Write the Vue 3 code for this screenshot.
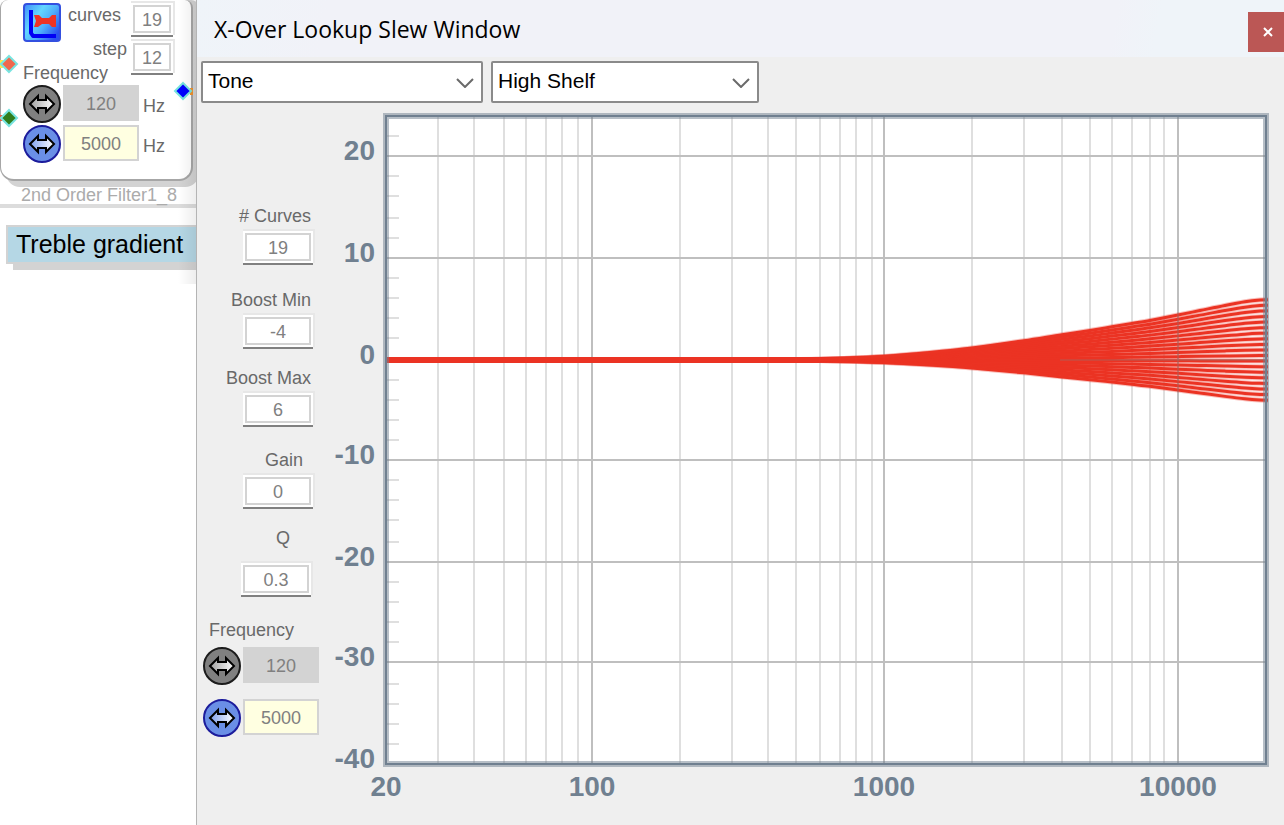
<script setup>
import { ref } from 'vue'

const curves = ref('19')
const step = ref('12')
const lowFreq = ref('120')
const highFreq = ref('5000')
const filterType = ref('Tone')
const filterShape = ref('High Shelf')

const fields = ref([
  { id: 'num-curves', label: '# Curves', value: '19', kind: 'end' },
  { id: 'boost-min', label: 'Boost Min', value: '-4', kind: 'end' },
  { id: 'boost-max', label: 'Boost Max', value: '6', kind: 'end' },
  { id: 'gain', label: 'Gain', value: '0', kind: 'mid' },
  { id: 'q', label: 'Q', value: '0.3', kind: 'spread' }
])

const majorX = [592, 884, 1178]
const minorX = [
  438, 474, 504, 526, 546, 562, 578,
  680, 732, 768, 796, 820, 840, 856, 872,
  972, 1024, 1062, 1090, 1112, 1132, 1150, 1164
]
const majorY = [156, 258, 360, 460, 562, 662]
const minorY = [
  136, 176, 196, 218, 238, 278, 298, 318, 338, 380, 400, 420, 440,
  480, 500, 520, 542, 582, 602, 622, 642, 684, 704, 724, 744
]
const yLabels = [
  { t: '20', y: 160 }, { t: '10', y: 262 }, { t: '0', y: 364 }, { t: '-10', y: 464 },
  { t: '-20', y: 566 }, { t: '-30', y: 666 }, { t: '-40', y: 768 }
]
const xLabels = [
  { t: '20', x: 386 }, { t: '100', x: 592 }, { t: '1000', x: 884 }, { t: '10000', x: 1178 }
]

// Shelf response: fraction of the full boost reached at each x
const shelf = [
  [387, 0], [740, 0], [800, 0.008], [837, 0.022], [884, 0.06], [930, 0.125], [972, 0.2],
  [1024, 0.32], [1062, 0.42], [1090, 0.49], [1112, 0.55], [1132, 0.605], [1150, 0.655],
  [1178, 0.745], [1200, 0.82], [1225, 0.905], [1245, 0.965], [1260, 0.995], [1268, 1]
]
function curvePath(db) {
  const p = shelf.map(([x, f]) => [x, 360 - f * db * 10.05])
  let d = `M${p[0][0]} ${p[0][1]}`
  for (let i = 0; i < p.length - 1; i++) {
    const a = p[Math.max(i - 1, 0)]
    const b = p[i]
    const c = p[i + 1]
    const e = p[Math.min(i + 2, p.length - 1)]
    const h = (c[0] - b[0]) / 3
    const m1 = i ? (c[1] - a[1]) / (c[0] - a[0]) : 0
    const m2 = (e[1] - b[1]) / (e[0] - b[0])
    d += ` C${b[0] + h} ${b[1] + m1 * h} ${c[0] - h} ${c[1] - m2 * h} ${c[0]} ${c[1]}`
  }
  return d
}
const paths = Array.from({ length: 19 }, (_, i) => curvePath(-4 + (i * 10) / 18))
</script>

<template>
  <div class="desktop">
    <svg class="defs" width="0" height="0" aria-hidden="true">
      <defs>
        <linearGradient id="arrowGrey" x1="0" x2="1" y1="0" y2="0">
          <stop offset="0" stop-color="#a0a0a0" /><stop offset="1" stop-color="#ffffff" />
        </linearGradient>
        <linearGradient id="arrowBlue" x1="0" x2="1" y1="0" y2="0">
          <stop offset="0" stop-color="#7fa0ee" /><stop offset="1" stop-color="#ffffff" />
        </linearGradient>
        <symbol id="swap" viewBox="0 0 38 38">
          <path d="M7 19 L15 11 V15 H23 V11 L31 19 L23 27 V23 H15 V27 Z" stroke="#000" stroke-width="2" />
        </symbol>
      </defs>
    </svg>

    <aside class="canvas">
      <section class="node">
        <div class="node-top">
          <svg class="node-icon" viewBox="0 0 38 39" aria-hidden="true">
            <defs>
              <linearGradient id="tile" x1="0" y1="0" x2="1" y2="0.7">
                <stop offset="0" stop-color="#3f8cf8" />
                <stop offset="0.4" stop-color="#62d6ff" />
                <stop offset="0.65" stop-color="#4fb0fb" />
                <stop offset="1" stop-color="#2a50f0" />
              </linearGradient>
            </defs>
            <rect x="1" y="1" width="36" height="37" rx="3" fill="url(#tile)" stroke="#3350e0" stroke-width="2" />
            <path d="M8 7 V30 L10 33 H33" fill="none" stroke="#0000f4" stroke-width="4" stroke-linejoin="round" />
            <path d="M11 12 H16 L19 15 H26 L29 12 H33 V24 H29 L26 21 H19 L15 24 H11 L13 18 Z" fill="#ee3324" />
          </svg>
          <div class="node-labels">
            <label for="curves">curves</label>
            <label for="step" class="to-end">step</label>
          </div>
          <div class="node-inputs">
            <input id="curves" v-model="curves" class="box" />
            <input id="step" v-model="step" class="box" />
          </div>
        </div>
        <div class="caption">Frequency</div>
        <div class="freq-row">
          <button class="swap" aria-label="Adjust low frequency"><svg viewBox="0 0 38 38" fill="url(#arrowGrey)"><use href="#swap" /></svg></button>
          <input id="nlow" v-model="lowFreq" class="freq off" disabled />
          <label for="nlow">Hz</label>
        </div>
        <div class="freq-row">
          <button class="swap blue" aria-label="Adjust high frequency"><svg viewBox="0 0 38 38" fill="url(#arrowBlue)"><use href="#swap" /></svg></button>
          <input id="nhigh" v-model="highFreq" class="freq" />
          <label for="nhigh">Hz</label>
        </div>
      </section>
      <div class="node-name">2nd Order Filter1_8</div>
      <div class="tag">Treble gradient</div>
      <svg class="pins" viewBox="0 0 196 130" aria-hidden="true">
        <path d="M0 60 H3 V68 H0 Z" fill="#ffe84a" />
        <path d="M0 115 H3 V121 H0 Z" fill="#f0583a" />
        <path d="M190 88 H193 V95 H190 Z" fill="#f0902c" />
        <g stroke="#78e4e0" stroke-width="2">
          <path d="M9 56 L17 64 L9 72 L1 64 Z" fill="#f0684e" />
          <path d="M9 110 L17 118 L9 126 L1 118 Z" fill="#2f7d1c" />
          <path d="M183 83 L191 91 L183 99 L175 91 Z" fill="#0000ff" />
        </g>
      </svg>
    </aside>

    <main class="window">
      <header class="titlebar">
        <h1>X-Over Lookup Slew Window</h1>
        <button class="close" aria-label="Close">
          <svg viewBox="0 0 12 12"><path d="M2 2 L10 10 M10 2 L2 10" stroke="#fff" stroke-width="2" /></svg>
        </button>
      </header>
      <div class="toolbar">
        <div class="combo combo-type">
          <select v-model="filterType" aria-label="Filter type"><option>Tone</option></select>
          <svg viewBox="0 0 18 10" aria-hidden="true"><path d="M1 1 L9 9 L17 1" fill="none" stroke="#6a6a6a" stroke-width="2" /></svg>
        </div>
        <div class="combo combo-shape">
          <select v-model="filterShape" aria-label="Filter shape"><option>High Shelf</option></select>
          <svg viewBox="0 0 18 10" aria-hidden="true"><path d="M1 1 L9 9 L17 1" fill="none" stroke="#6a6a6a" stroke-width="2" /></svg>
        </div>
      </div>

      <div class="content">
        <form class="panel" @submit.prevent>
          <div v-for="f in fields" :key="f.id" class="field" :class="f.kind">
            <label :for="f.id">{{ f.label }}</label>
            <input :id="f.id" v-model="f.value" class="box wide" />
          </div>
          <div class="freqs">
            <div class="caption">Frequency</div>
            <div class="freq-row">
              <button type="button" class="swap" aria-label="Adjust low frequency"><svg viewBox="0 0 38 38" fill="url(#arrowGrey)"><use href="#swap" /></svg></button>
              <input v-model="lowFreq" class="freq off" disabled aria-label="Low frequency" />
            </div>
            <div class="freq-row">
              <button type="button" class="swap blue" aria-label="Adjust high frequency"><svg viewBox="0 0 38 38" fill="url(#arrowBlue)"><use href="#swap" /></svg></button>
              <input v-model="highFreq" class="freq" aria-label="High frequency" />
            </div>
          </div>
        </form>

        <svg class="chart" viewBox="326 103 958 722" role="img" aria-label="Filter response curves">
          <rect x="386" y="116" width="880" height="648" fill="#fff" />
          <g stroke="#dfdfdf" stroke-width="2">
            <line v-for="x in minorX" :key="x" :x1="x" :x2="x" y1="117" y2="763" />
            <line v-for="y in minorY" :key="y" x1="387" x2="399" :y1="y" :y2="y" />
          </g>
          <g stroke="#bfbfbf" stroke-width="2">
            <line v-for="x in majorX" :key="x" :x1="x" :x2="x" y1="117" y2="763" />
            <line v-for="y in majorY" :key="y" x1="387" x2="1265" :y1="y" :y2="y" />
          </g>
          <g fill="none" stroke="#eb3323">
            <path v-for="(d, i) in paths" :key="'h' + i" :d="d" stroke-width="5" stroke-opacity="0.3" />
            <path v-for="(d, i) in paths" :key="i" :d="d" stroke-width="3" />
            <path d="M387 360 H820" stroke-width="6" />
          </g>
          <g stroke="#808080" stroke-width="2" stroke-opacity="0.25">
            <line x1="1178" x2="1178" y1="313" y2="392" />
            <line x1="1060" x2="1266" y1="360" y2="360" />
          </g>
          <rect x="386" y="116" width="880" height="648" fill="none" stroke="#708090" stroke-opacity="0.5" stroke-width="6" />
          <rect x="386" y="116" width="880" height="648" fill="none" stroke="#708090" stroke-width="2" />
          <g class="axis" text-anchor="end">
            <text v-for="l in yLabels" :key="l.t" x="375" :y="l.y">{{ l.t }}</text>
          </g>
          <g class="axis" text-anchor="middle">
            <text v-for="l in xLabels" :key="l.t" :x="l.x" y="796">{{ l.t }}</text>
          </g>
        </svg>
      </div>
    </main>
  </div>
</template>

<style>
body { background: #fff; }
</style>

<style scoped>
* { box-sizing: border-box; }
.desktop {
  display: flex;
  min-height: 100vh;
  overflow: hidden;
  font: 18px/20px "Liberation Sans", Arial, sans-serif;
  color: #696969;
}
.defs { position: absolute; }
button { border: 0; padding: 0; }
input { font: inherit; color: #808080; text-align: center; border-radius: 0; padding: 2px 0 0; margin: 0; }

.canvas { position: relative; flex: 0 0 196px; background: #fff; overflow: hidden; }
.canvas::after {
  content: "";
  position: absolute;
  top: 0;
  right: 0;
  width: 18px;
  height: 284px;
  background: linear-gradient(90deg, rgba(0, 0, 0, 0), rgba(0, 0, 0, 0.07));
}
.node {
  width: 193px;
  height: 181px;
  padding-left: 22px;
  border: solid #a6a6a6;
  border-width: 0 2px 2px 1px;
  border-radius: 8px 8px 14px 14px;
  background: #fff;
  box-shadow: 6px 6px 0 #d3d3d3, 6px 0 0 #d3d3d3;
}
.node-top { display: flex; height: 63px; padding-top: 5px; }
.node-icon { width: 38px; height: 39px; margin: -2px 7px 0 0; flex: none; }
.node-labels { display: flex; flex-direction: column; gap: 14px; width: 59px; }
.node-labels label { height: 20px; }
.to-end { text-align: right; }
.node-inputs { display: flex; flex-direction: column; gap: 10px; margin-left: 6px; }
.caption { height: 22px; }
.box {
  width: 38px;
  height: 28px;
  flex: none;
  border: 2px solid #d3d3d3;
  background: #fff;
  box-shadow: 0 0 0 2px #fff, 0 2px 0 2px #808080, 1px -1px 0 3px #e7e7e7;
}
.wide { width: 66px; }
.freq-row { display: flex; gap: 2px; height: 40px; }
.freq-row label { margin: 11px 0 0 2px; }
.swap { width: 38px; height: 38px; flex: none; border: 2px solid #1c1c1c; border-radius: 50%; background: #808080; }
.swap svg { display: block; width: 38px; height: 38px; margin: -2px; }
.swap.blue { border-color: #1c1c9c; background: #6a8fe6; }
.freq { width: 76px; height: 36px; border: 2px solid #d3d3d3; background: #ffffe1; }
.freq.off { background: #d3d3d3; }
.node-name {
  position: relative;
  height: 27px;
  padding: 4px 0 0 21px;
  border-bottom: 4px solid #dcdcdc;
  color: #ababab;
  white-space: nowrap;
}
.node-name::before {
  content: "";
  position: absolute;
  z-index: -1;
  inset: 6px 3px 0 0;
  background: #fff;
}
.tag {
  margin: 17px 0 0 6px;
  height: 39px;
  padding-left: 8px;
  border: 2px solid #d3d3d3;
  border-right: 0;
  background: #b5d7e5;
  box-shadow: 7px 6px 0 #d3d3d3;
  color: #000;
  font-size: 25px;
  line-height: 34px;
  white-space: nowrap;
}
.pins { position: absolute; left: 0; top: 0; width: 196px; height: 130px; pointer-events: none; }

.window { flex: 1; min-width: 0; border-left: 1px solid #b4b4b4; background: #efefef; }
.titlebar {
  display: flex;
  align-items: center;
  justify-content: space-between;
  height: 57px;
  padding-left: 17px;
  background: linear-gradient(100deg, #eff4f9, #f1f2f8 12%, #f1f2f8 84%, #eff4f9 88%);
}
h1 { margin: 0; font: 400 23px/30px "Open Sans", "Noto Sans", sans-serif; color: #000; white-space: nowrap; }
.close { display: grid; place-items: center; width: 36px; height: 40px; margin-top: 7px; padding-left: 4px; background: #bb5755; }
.close svg { width: 12px; height: 12px; }
.toolbar { display: flex; gap: 8px; padding: 4px 4px 0; height: 46px; }
.combo { position: relative; height: 42px; }
.combo-type { width: 282px; }
.combo-shape { width: 268px; }
.combo select {
  appearance: none;
  width: 100%;
  height: 42px;
  padding: 0 36px 2px 5px;
  border: 2px solid #8a8a8a;
  border-radius: 2px;
  background: #fff;
  color: #000;
  font: 21px/36px "Liberation Sans", Arial, sans-serif;
}
.combo svg { position: absolute; right: 9px; top: 17px; width: 18px; height: 10px; pointer-events: none; }

.content { display: flex; align-items: flex-start; }
.panel {
  flex: 0 0 129px;
  display: grid;
  grid-template-rows: 84px 78px 82px 78px 92px auto;
  padding-top: 103px;
}
.field { display: flex; flex-direction: column; align-items: flex-end; gap: 7px; padding-right: 15px; white-space: nowrap; }
.field label { height: 20px; }
.mid label { padding-right: 8px; }
.spread { gap: 17px; padding-right: 17px; }
.spread label { padding-right: 19px; }
.freqs { padding-left: 6px; }
.freqs .caption { height: 27px; padding-left: 6px; }
.freqs .freq-row { height: 52px; }
.chart { display: block; flex: 1; min-width: 0; width: 100%; height: auto; }
.axis { font: 700 28px "Liberation Sans", Arial, sans-serif; fill: #708090; }
</style>
